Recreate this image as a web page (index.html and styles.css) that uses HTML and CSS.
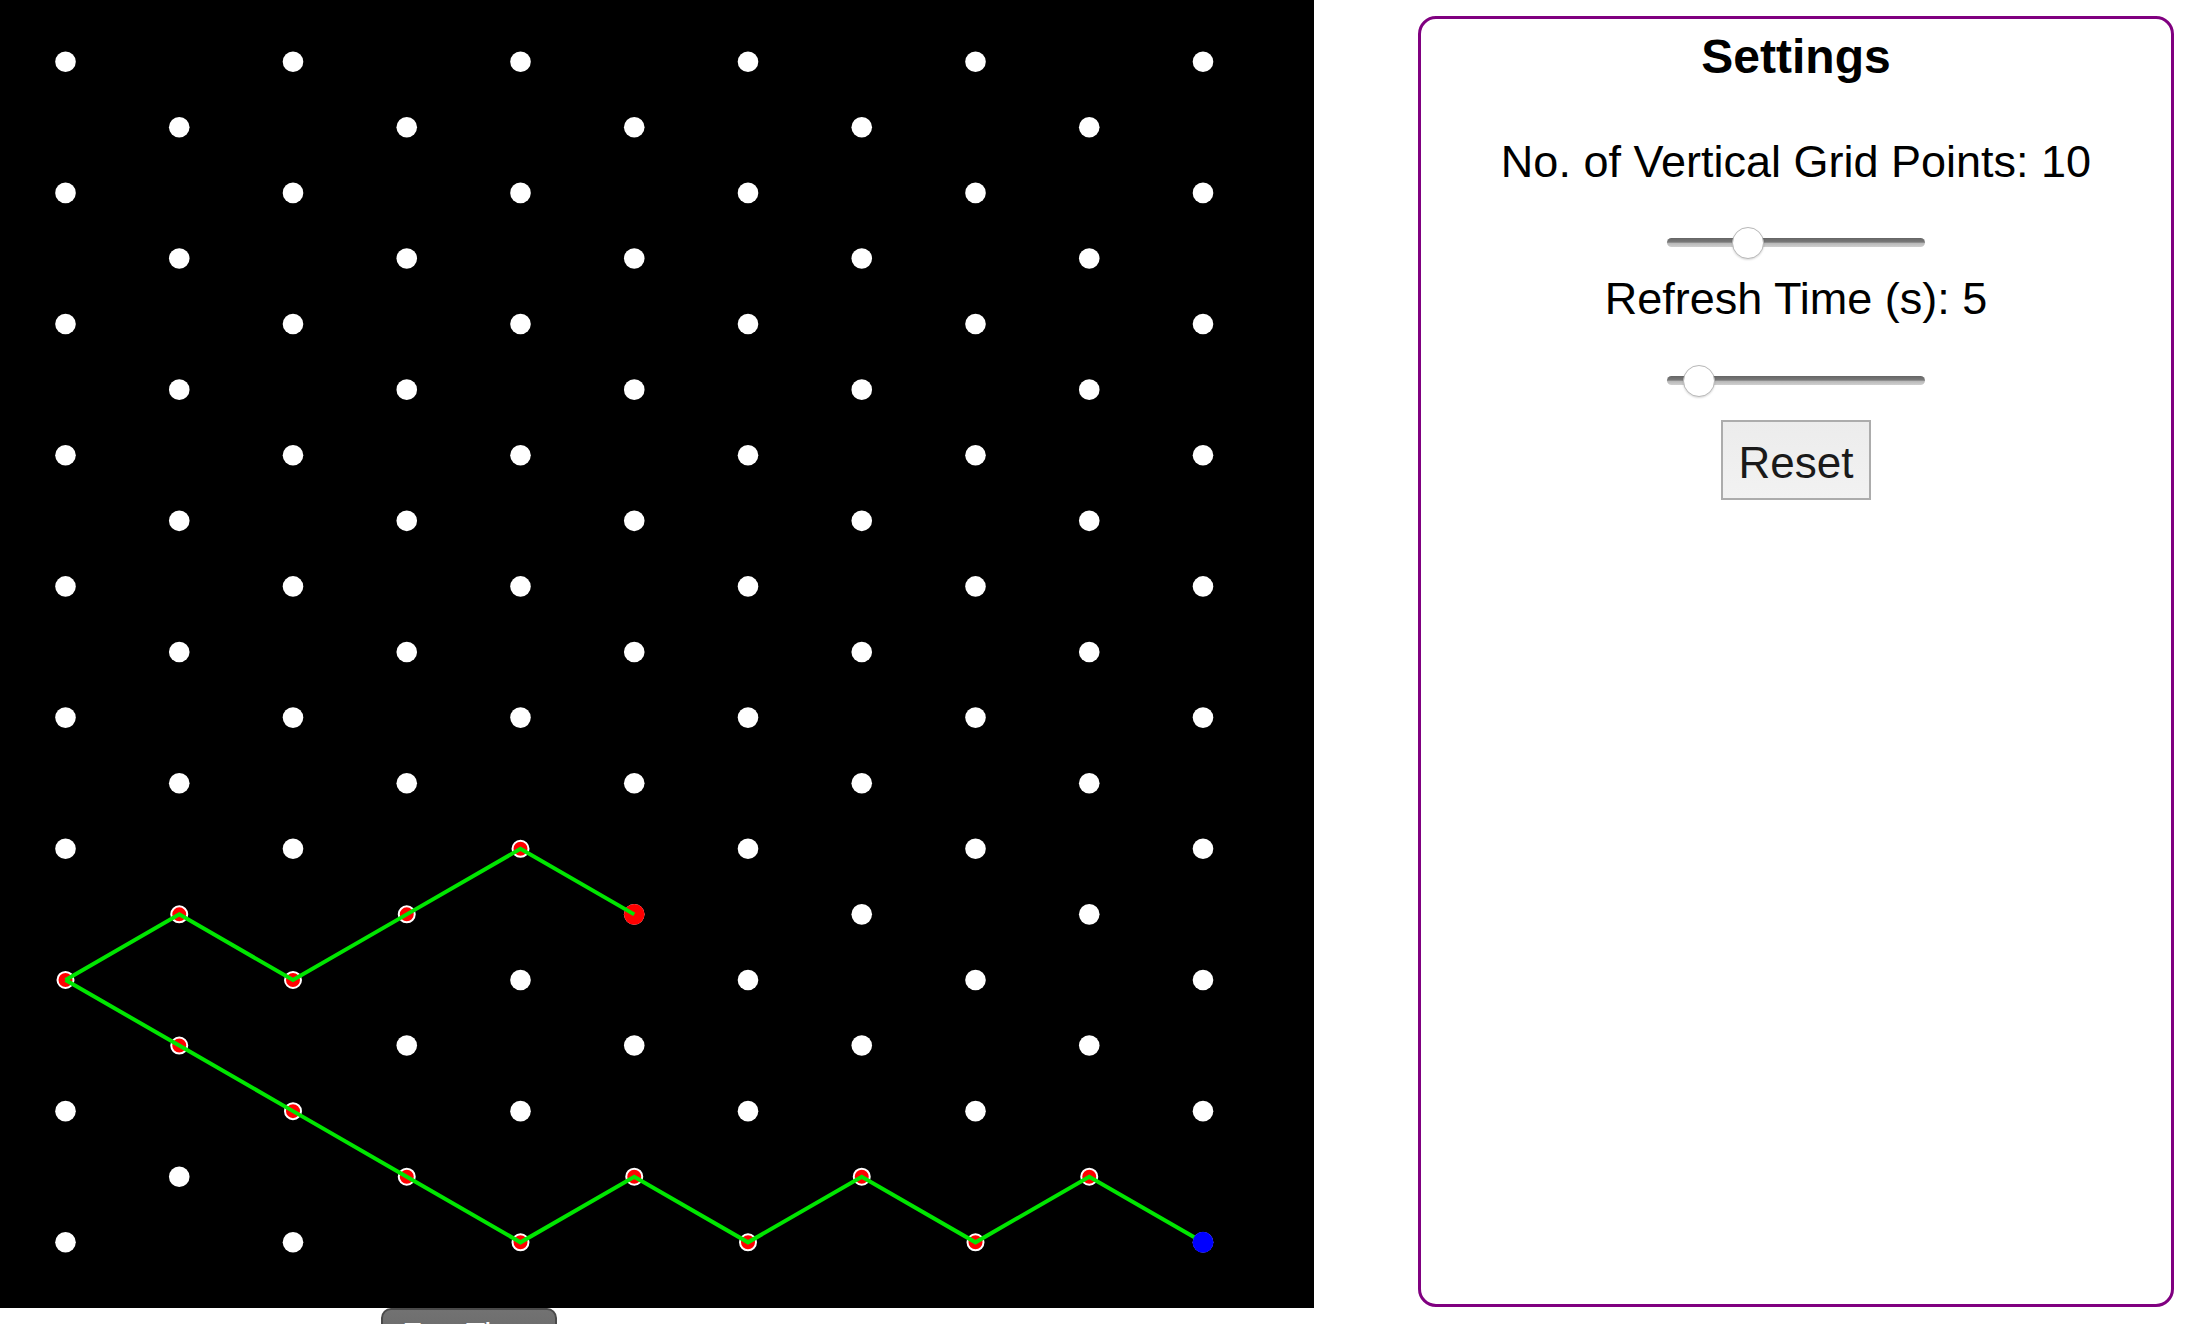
FILE: index.html
```html
<!DOCTYPE html>
<html lang="en">
<head>
<meta charset="utf-8">
<title>Grid Walk</title>
<link rel="stylesheet" href="styles.css">
</head>
<body>
<div class="page">
  <div class="board">
    <svg class="grid" width="1314" height="1308" viewBox="0 0 1314 1308" xmlns="http://www.w3.org/2000/svg">
      <defs>
        <g id="rowE" fill="#fff">
          <circle cx="65.5" cy="0" r="10.3"/>
          <circle cx="293" cy="0" r="10.3"/>
          <circle cx="520.5" cy="0" r="10.3"/>
          <circle cx="748" cy="0" r="10.3"/>
          <circle cx="975.5" cy="0" r="10.3"/>
          <circle cx="1203" cy="0" r="10.3"/>
        </g>
        <g id="rowO" fill="#fff">
          <circle cx="179.25" cy="0" r="10.3"/>
          <circle cx="406.75" cy="0" r="10.3"/>
          <circle cx="634.25" cy="0" r="10.3"/>
          <circle cx="861.75" cy="0" r="10.3"/>
          <circle cx="1089.25" cy="0" r="10.3"/>
        </g>
      </defs>
      <rect x="0" y="0" width="1314" height="1308" fill="#000"/>
      <use href="#rowE" y="61.7"/>
      <use href="#rowO" y="127.29"/>
      <use href="#rowE" y="192.88"/>
      <use href="#rowO" y="258.47"/>
      <use href="#rowE" y="324.06"/>
      <use href="#rowO" y="389.65"/>
      <use href="#rowE" y="455.24"/>
      <use href="#rowO" y="520.83"/>
      <use href="#rowE" y="586.42"/>
      <use href="#rowO" y="652.01"/>
      <use href="#rowE" y="717.6"/>
      <use href="#rowO" y="783.19"/>
      <use href="#rowE" y="848.78"/>
      <use href="#rowO" y="914.37"/>
      <use href="#rowE" y="979.96"/>
      <use href="#rowO" y="1045.55"/>
      <use href="#rowE" y="1111.14"/>
      <use href="#rowO" y="1176.73"/>
      <use href="#rowE" y="1242.32"/>

      <g fill="#000">
        <circle cx="65.5" cy="979.96" r="11.5"/>
        <circle cx="179.25" cy="914.37" r="11.5"/>
        <circle cx="293" cy="979.96" r="11.5"/>
        <circle cx="406.75" cy="914.37" r="11.5"/>
        <circle cx="520.5" cy="848.78" r="11.5"/>
        <circle cx="179.25" cy="1045.55" r="11.5"/>
        <circle cx="293" cy="1111.14" r="11.5"/>
        <circle cx="406.75" cy="1176.73" r="11.5"/>
        <circle cx="520.5" cy="1242.32" r="11.5"/>
        <circle cx="634.25" cy="1176.73" r="11.5"/>
        <circle cx="748" cy="1242.32" r="11.5"/>
        <circle cx="861.75" cy="1176.73" r="11.5"/>
        <circle cx="975.5" cy="1242.32" r="11.5"/>
        <circle cx="1089.25" cy="1176.73" r="11.5"/>
      </g>

      <g fill="#ff0000" stroke="#fff" stroke-width="2">
        <circle cx="65.5" cy="979.96" r="8"/>
        <circle cx="179.25" cy="914.37" r="8"/>
        <circle cx="293" cy="979.96" r="8"/>
        <circle cx="406.75" cy="914.37" r="8"/>
        <circle cx="520.5" cy="848.78" r="8"/>
        <circle cx="179.25" cy="1045.55" r="8"/>
        <circle cx="293" cy="1111.14" r="8"/>
        <circle cx="406.75" cy="1176.73" r="8"/>
        <circle cx="520.5" cy="1242.32" r="8"/>
        <circle cx="634.25" cy="1176.73" r="8"/>
        <circle cx="748" cy="1242.32" r="8"/>
        <circle cx="861.75" cy="1176.73" r="8"/>
        <circle cx="975.5" cy="1242.32" r="8"/>
        <circle cx="1089.25" cy="1176.73" r="8"/>
      </g>

      <circle cx="634.25" cy="914.37" r="10.3" fill="#ff0000"/>

      <g fill="none" stroke="#00e600" stroke-width="4">
        <polyline points="65.5,979.96 179.25,914.37 293,979.96 406.75,914.37 520.5,848.78 634.25,914.37"/>
        <polyline points="65.5,979.96 179.25,1045.55 293,1111.14 406.75,1176.73 520.5,1242.32 634.25,1176.73 748,1242.32 861.75,1176.73 975.5,1242.32 1089.25,1176.73 1203,1242.32"/>
      </g>

      <circle cx="1203" cy="1242.32" r="10.5" fill="#0000ff"/>
    </svg>
    <div class="board-controls">
      <button class="fun-btn" type="button">Fun Time</button>
    </div>
  </div>

  <aside class="panel">
    <h2 class="panel-title">Settings</h2>
    <p class="setting-label">No. of Vertical Grid Points: 10</p>
    <input class="slider slider-first" type="range" min="2" max="30" value="10">
    <p class="setting-label setting-label-second">Refresh Time (s): 5</p>
    <input class="slider slider-second" type="range" min="1" max="56" value="5">
    <button class="reset-btn" type="button">Reset</button>
  </aside>
</div>
</body>
</html>
```

FILE: styles.css
```css
html, body {
  margin: 0;
  padding: 0;
  background: #fff;
}

body {
  font-family: "Liberation Sans", Arial, sans-serif;
  color: #000;
}

.page {
  display: flex;
  align-items: flex-start;
}

.board {
  width: 1314px;
  display: flex;
  flex-direction: column;
  flex: none;
}

.grid {
  display: block;
  width: 1314px;
  height: 1308px;
}

.board-controls {
  display: flex;
  padding-left: 381px;
}

.fun-btn {
  width: 176px;
  height: 52px;
  box-sizing: border-box;
  background: linear-gradient(#727272, #666);
  border: 2px solid #4a4a4a;
  border-radius: 10px;
  color: #fff;
  font-family: "Liberation Sans", Arial, sans-serif;
  font-size: 32px;
  line-height: 36px;
  padding: 0;
}

.panel {
  flex: none;
  margin-left: 104px;
  margin-top: 16px;
  width: 756px;
  height: 1291px;
  box-sizing: border-box;
  border: 3px solid #800080;
  border-radius: 18px;
  display: flex;
  flex-direction: column;
  align-items: center;
}

.panel-title {
  margin: 10px 0 0;
  font-size: 48px;
  font-weight: bold;
  line-height: 55px;
}

.setting-label {
  margin: 52px 0 0;
  font-size: 45px;
  line-height: 52px;
}

.setting-label-second {
  margin-top: 14px;
}

.slider {
  -webkit-appearance: none;
  appearance: none;
  width: 258px;
  height: 33px;
  margin: 38px 0 0;
  padding: 0;
  background: transparent;
}

.slider-second {
  margin-top: 39px;
}

.slider::-webkit-slider-runnable-track {
  height: 9px;
  border-radius: 5px;
  background: linear-gradient(#656565 0%, #7a7a7a 45%, #b9b9b9 60%, #d0d0d0 100%);
}

.slider::-webkit-slider-thumb {
  -webkit-appearance: none;
  appearance: none;
  width: 32px;
  height: 32px;
  margin-top: -11.5px;
  border-radius: 50%;
  background: #fff;
  border: 1px solid #b8b8b8;
  box-sizing: border-box;
  box-shadow: 0 1px 2px rgba(0, 0, 0, 0.15);
}

.reset-btn {
  margin-top: 23px;
  width: 150px;
  height: 80px;
  box-sizing: border-box;
  padding: 5px 0 0;
  background: linear-gradient(#ececec, #f2f2f2);
  border: 2px solid #acacac;
  border-radius: 0;
  color: #1a1a1a;
  font-family: "Liberation Sans", Arial, sans-serif;
  font-size: 44px;
}
```
